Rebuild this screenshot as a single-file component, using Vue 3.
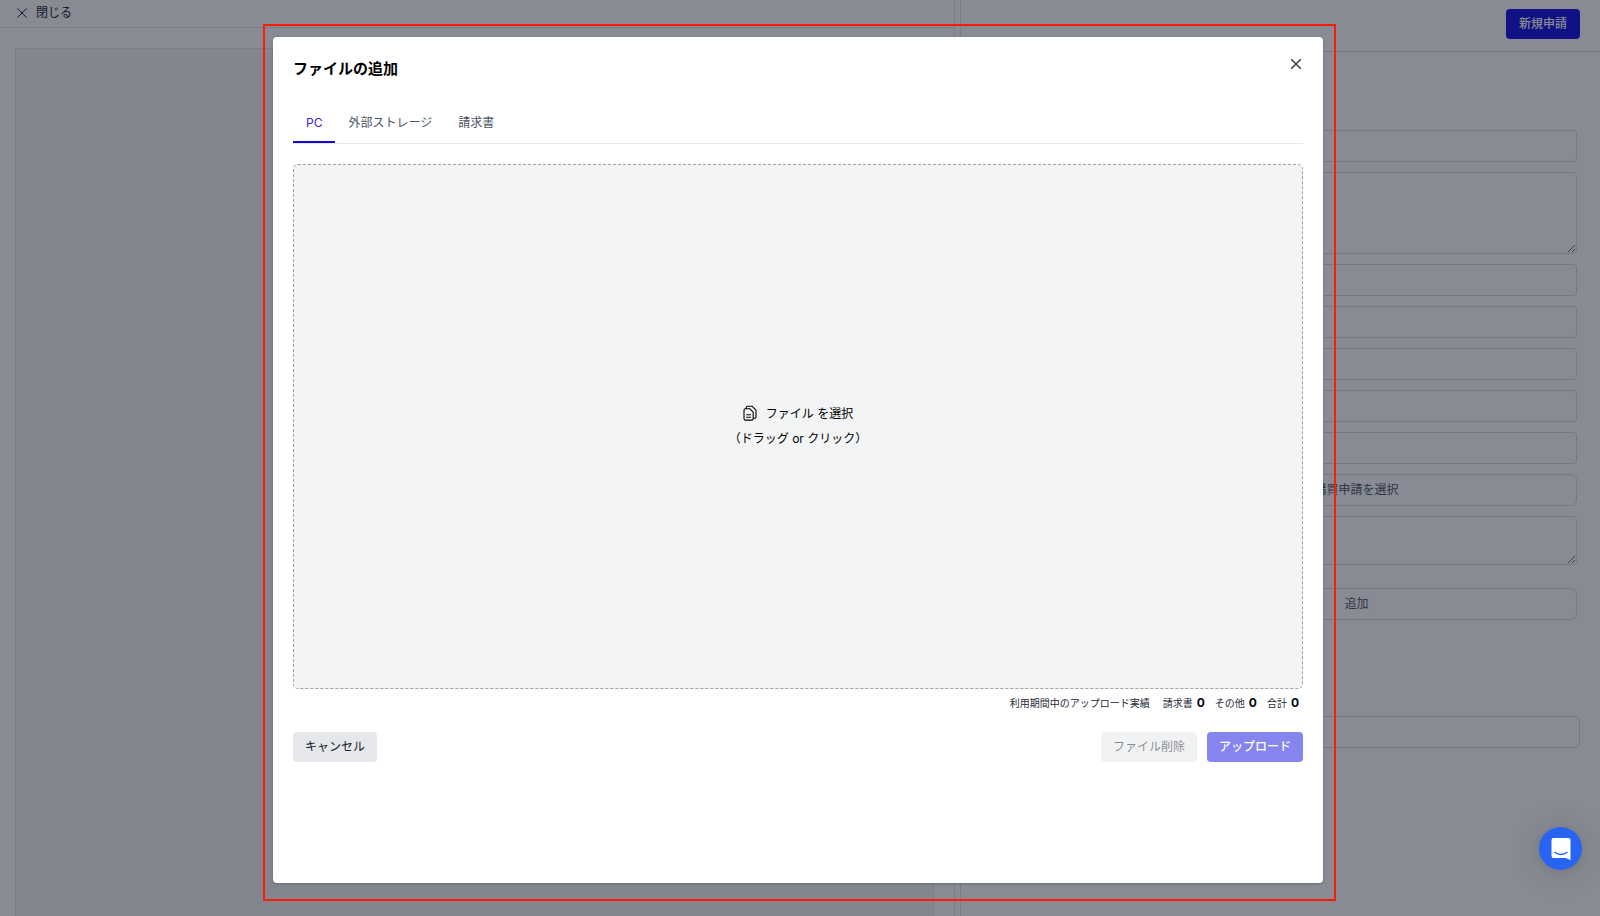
<script setup>
import { ref } from 'vue'

const tabs = ['PC', '外部ストレージ', '請求書']
const activeTab = ref('PC')

const fields = [
  { id: 'title', label: '件名', type: 'input' },
  { id: 'body', label: '内容', type: 'textarea', size: 'tall' },
  { id: 'f1', label: '項目1', type: 'input' },
  { id: 'f2', label: '項目2', type: 'input' },
  { id: 'f3', label: '項目3', type: 'input' },
  { id: 'f4', label: '項目4', type: 'input' },
  { id: 'f5', label: '項目5', type: 'input' },
  { id: 'purchase', type: 'button', text: '購買申請を選択' },
  { id: 'memo', label: '備考', type: 'textarea', size: 'short' },
  { id: 'add', type: 'button', text: '追加', spaced: true },
]

const totals = [
  { label: '請求書', value: 0 },
  { label: 'その他', value: 0 },
  { label: '合計', value: 0 },
]
</script>

<template>
  <div class="page">
    <main class="workspace">
      <section class="preview">
        <header class="preview-bar">
          <button type="button" class="close-link">
            <svg width="12" height="12" viewBox="0 0 12 12" aria-hidden="true">
              <path d="M1.5 1.5l9 9M10.5 1.5l-9 9" fill="none" stroke="currentColor" stroke-width="1" />
            </svg>
            閉じる
          </button>
        </header>
        <div class="preview-body"><div class="preview-sheet"></div></div>
      </section>
      <div class="splitter"></div>
      <section class="detail">
        <header class="detail-bar">
          <button type="button" class="btn primary">新規申請</button>
        </header>
        <form class="form" @submit.prevent>
          <template v-for="f in fields" :key="f.id">
            <input v-if="f.type === 'input'" :id="f.id" class="control" type="text" :aria-label="f.label" />
            <textarea v-else-if="f.type === 'textarea'" :id="f.id" class="control" :class="f.size" :aria-label="f.label"></textarea>
            <button v-else :id="f.id" type="button" class="control choose" :class="{ spaced: f.spaced }">{{ f.text }}</button>
          </template>
        </form>
        <input class="control comment" type="text" aria-label="コメント" />
      </section>
    </main>

    <div class="backdrop">
      <div class="frame">
        <div class="modal" role="dialog" aria-modal="true" aria-labelledby="modal-title">
          <header class="modal-head">
            <h2 id="modal-title">ファイルの追加</h2>
            <button type="button" class="modal-close" aria-label="閉じる">
              <svg width="12" height="12" viewBox="0 0 12 12" aria-hidden="true">
                <path d="M1.2 1.2l9.6 9.6M10.8 1.2l-9.6 9.6" fill="none" stroke="currentColor" stroke-width="1.6" />
              </svg>
            </button>
          </header>
          <div class="tabs" role="tablist">
            <button
              v-for="t in tabs"
              :key="t"
              type="button"
              role="tab"
              class="tab"
              :class="{ active: t === activeTab }"
              :aria-selected="t === activeTab"
              @click="activeTab = t"
            >{{ t }}</button>
          </div>
          <button type="button" class="dropzone">
            <span class="drop-line">
              <svg width="14" height="16" viewBox="0 0 14 16" aria-hidden="true">
                <g fill="none" stroke="currentColor" stroke-width="1.1" stroke-linejoin="round" stroke-linecap="round">
                  <path d="M1 5.2a1.5 1.5 0 0 1 1.5-1.5h4.2l3.5 3.5v6.4a1.5 1.5 0 0 1-1.5 1.5H2.500a1.5 1.500 0 0 1-1.5-1.5z" />
                  <path d="M3.200 3.500V2.700a1.500 1.500 0 0 1 1.500-1.500h4.300l4 4v6.600a1.500 1.500 0 0 1-1.500 1.500h-1" />
                  <path d="M3.700 9.800h3.800M3.700 12.300h3.800" />
                </g>
              </svg>
              ファイル を選択
            </span>
            <span class="drop-line">（ドラッグ or クリック）</span>
          </button>
          <div class="usage">
            <span class="usage-title">利用期間中のアップロード実績</span>
            <span v-for="t in totals" :key="t.label" class="total">{{ t.label }}<b>{{ t.value }}</b></span>
          </div>
          <footer class="actions">
            <button type="button" class="btn neutral">キャンセル</button>
            <span class="actions-end">
              <button type="button" class="btn neutral" disabled>ファイル削除</button>
              <button type="button" class="btn primary" disabled>アップロード</button>
            </span>
          </footer>
        </div>
      </div>
    </div>

    <button type="button" class="chat" aria-label="チャット">
      <svg width="22" height="24" viewBox="0 0 22 24" aria-hidden="true">
        <path d="M3.5 1h15a2 2 0 0 1 2 2v20l-5-2h-12a2 2 0 0 1-2-2V3a2 2 0 0 1 2-2z" fill="#fff" />
        <path d="M4.8 15.3c3.6 2.9 8.8 2.9 12.4 0" fill="none" stroke="#2864f4" stroke-width="1.3" stroke-linecap="round" />
      </svg>
    </button>
  </div>
</template>

<style>
body {
  margin: 0;
  overflow: hidden;
}
</style>

<style scoped>
.page {
  position: relative;
  height: 100vh;
  overflow: hidden;
  background: #fff;
  color: #111827;
  font: 12px/18px Inter, "Noto Sans CJK JP", sans-serif;
}
.page * {
  box-sizing: border-box;
}
button {
  border: 0;
  padding: 0;
  background: none;
  color: inherit;
  font: inherit;
}
.workspace {
  display: flex;
  height: 100%;
}
.preview {
  flex: 0 0 calc(60% - 6px);
  display: flex;
  flex-direction: column;
}
.preview-bar {
  display: flex;
  align-items: center;
  height: 28px;
  padding: 0 16px 2px;
  border-bottom: 1px solid #e5e7eb;
}
.close-link {
  display: flex;
  align-items: center;
  gap: 8px;
}
.preview-body {
  flex: 1;
  display: flex;
  padding: 20px 20px 0 15px;
}
.preview-sheet {
  flex: 1;
  background: #f3f4f6;
  border: 1px solid #e5e7eb;
  border-bottom: 0;
}
.splitter {
  width: 7px;
  border: 1px solid #e0e2e6;
  border-width: 0 1px;
}
.detail {
  flex: 1;
  display: flex;
  flex-direction: column;
}
.detail-bar {
  display: flex;
  justify-content: flex-end;
  align-items: center;
  height: 52px;
  padding: 0 20px 4px;
  border-bottom: 1px solid #d9dce2;
}
.detail-bar .btn {
  padding: 0 13px;
}
.form {
  display: flex;
  flex-direction: column;
  gap: 10px;
  padding: 78px 23px 0 175px;
}
.control {
  flex: none;
  width: 100%;
  height: 32px;
  margin: 0;
  background: #fff;
  border: 1px solid #d8dbe1;
  border-radius: 4px;
  font: inherit;
}
.control.tall {
  height: 82px;
}
.control.short {
  height: 49px;
}
.choose {
  border-radius: 6px;
  color: #4b5563;
}
.choose.spaced {
  margin-top: 13px;
}
.comment {
  width: auto;
  margin: 96px 20px 0 20px;
}
.backdrop {
  position: absolute;
  inset: 0;
  display: flex;
  padding: 24px 264px 15px 263px;
  background: rgba(17, 24, 39, 0.5);
}
.frame {
  flex: 1;
  display: flex;
  padding: 11px 11px 16px 8px;
  border: 2px solid #ff1a08;
}
.modal {
  flex: 1;
  display: flex;
  flex-direction: column;
  padding: 20px;
  background: #fff;
  border-radius: 4px;
  box-shadow: 0 1px 3px rgba(0, 0, 0, 0.2);
}
.modal-head {
  display: flex;
  justify-content: space-between;
  align-items: flex-start;
}
.modal-head h2 {
  margin: 0;
  color: #000;
  font-size: 15px;
  line-height: 24px;
  font-weight: 600;
}
.modal-close {
  display: flex;
  padding: 1px;
  color: #374151;
}
.tabs {
  display: flex;
  margin-top: 21px;
  border-bottom: 1px solid #e5e7eb;
}
.tab {
  height: 41px;
  padding: 2px 13px 0;
  border-bottom: 2px solid transparent;
  color: #4b5563;
}
.tab.active {
  border-color: #1008d8;
  color: #3a22d4;
}
.dropzone {
  flex: 0 0 525px;
  display: flex;
  flex-direction: column;
  align-items: center;
  justify-content: center;
  margin-top: 20px;
  padding-bottom: 2px;
  background: #f3f4f6;
  border: 1px dashed #9ca3af;
  border-radius: 5px;
  color: #000;
}
.drop-line {
  display: flex;
  align-items: center;
  gap: 9px;
  line-height: 25px;
}
.usage {
  display: flex;
  justify-content: flex-end;
  align-items: center;
  gap: 10px;
  margin-top: 5px;
  padding-right: 4px;
  color: #1f2937;
  font-size: 10px;
}
.usage-title {
  margin-right: 3px;
}
.total {
  display: flex;
  align-items: center;
  gap: 4px;
}
.total b {
  color: #030712;
  font-size: 12px;
  font-weight: 700;
}
.actions {
  display: flex;
  justify-content: space-between;
  margin-top: 20px;
}
.actions-end {
  display: flex;
  gap: 10px;
}
.btn {
  height: 30px;
  padding: 0 12px;
  border-radius: 4px;
}
.btn.primary {
  background: #0f0be0;
  color: #fff;
  font-weight: 500;
}
.btn.neutral {
  background: #e5e7eb;
}
.btn:disabled {
  opacity: 0.5;
}
.chat {
  position: absolute;
  right: 18px;
  bottom: 46px;
  display: flex;
  align-items: center;
  justify-content: center;
  width: 43px;
  height: 43px;
  border-radius: 50%;
  background: #2864f4;
  box-shadow: 0 1px 6px rgba(0, 0, 0, 0.06), 0 2px 32px rgba(0, 0, 0, 0.16);
}
</style>
